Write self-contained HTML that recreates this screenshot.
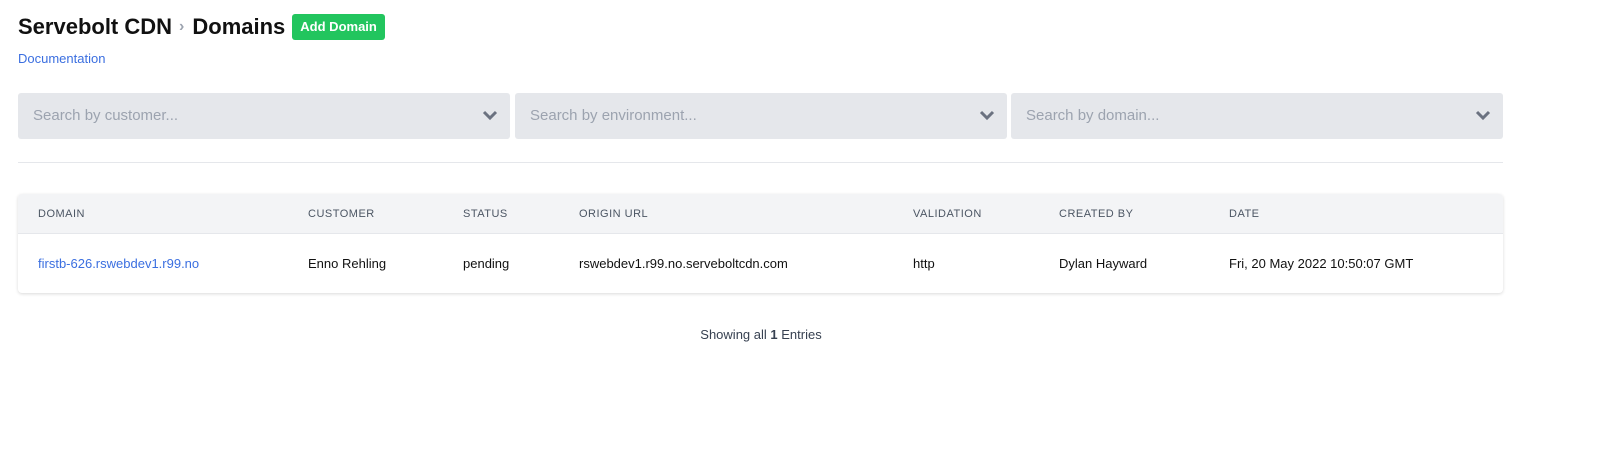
<!DOCTYPE html>
<html><head><style>
*{box-sizing:border-box;margin:0;padding:0}
body{width:1622px;height:473px;background:#fff;font-family:"Segoe UI","Liberation Sans",sans-serif;color:#111;position:relative;overflow:hidden}
.t{position:absolute;left:18px;top:14px;font-size:22px;font-weight:600;display:flex;align-items:center;white-space:nowrap}
.t .sep{color:#9ca3af;font-size:16px;margin:0 8px 0 7px}
.btn{background:#22c55e;color:#fff;font-size:13px;font-weight:700;border-radius:3px;padding:4px 8px;margin-left:7px;line-height:18px}
.doc{position:absolute;left:18px;top:51px;font-size:13px;color:#3b6fe0}
.sel{position:absolute;top:93px;height:46px;background:#e5e7eb;border-radius:3px;color:#9ca3af;font-size:15px;padding:14px 15px}
.sel svg{position:absolute;right:12px;top:17px}
.hr{position:absolute;left:18px;top:162px;width:1485px;height:1px;background:#e5e7eb}
.tbl{position:absolute;left:18px;top:194px;width:1485px;height:99px;border-radius:4px;box-shadow:0 1px 3px rgba(0,0,0,.15);background:#fff;overflow:hidden}
.hd{height:40px;background:#f3f4f6;border-bottom:1px solid #e5e7eb;position:relative;font-size:11px;letter-spacing:.5px;color:#4b5563}
.rw{height:59px;position:relative;font-size:13px;color:#111}
.hd span,.rw span{position:absolute;white-space:nowrap}
.hd span{top:14px}.rw span{top:22px}
.foot{position:absolute;left:0;width:1522px;top:327px;text-align:center;font-size:13px;color:#374151}
</style></head><body>
<div class="t">Servebolt CDN<span class="sep">›</span>Domains<span class="btn">Add Domain</span></div>
<div class="doc">Documentation</div>
<div class="sel" style="left:18px;width:492px">Search by customer...<svg width="16" height="11" viewBox="0 0 16 11"><path d="M2 2l6 6 6-6" stroke="#6b7280" stroke-width="3" fill="none"/></svg></div>
<div class="sel" style="left:515px;width:492px">Search by environment...<svg width="16" height="11" viewBox="0 0 16 11"><path d="M2 2l6 6 6-6" stroke="#6b7280" stroke-width="3" fill="none"/></svg></div>
<div class="sel" style="left:1011px;width:492px">Search by domain...<svg width="16" height="11" viewBox="0 0 16 11"><path d="M2 2l6 6 6-6" stroke="#6b7280" stroke-width="3" fill="none"/></svg></div>
<div class="hr"></div>
<div class="tbl">
<div class="hd"><span style="left:20px">DOMAIN</span><span style="left:290px">CUSTOMER</span><span style="left:445px">STATUS</span><span style="left:561px">ORIGIN URL</span><span style="left:895px">VALIDATION</span><span style="left:1041px">CREATED BY</span><span style="left:1211px">DATE</span></div>
<div class="rw"><span style="left:20px;color:#3b6fe0">firstb-626.rswebdev1.r99.no</span><span style="left:290px">Enno Rehling</span><span style="left:445px">pending</span><span style="left:561px">rswebdev1.r99.no.serveboltcdn.com</span><span style="left:895px">http</span><span style="left:1041px">Dylan Hayward</span><span style="left:1211px">Fri, 20 May 2022 10:50:07 GMT</span></div>
</div>
<div class="foot">Showing all <b>1</b> Entries</div>
</body></html>
